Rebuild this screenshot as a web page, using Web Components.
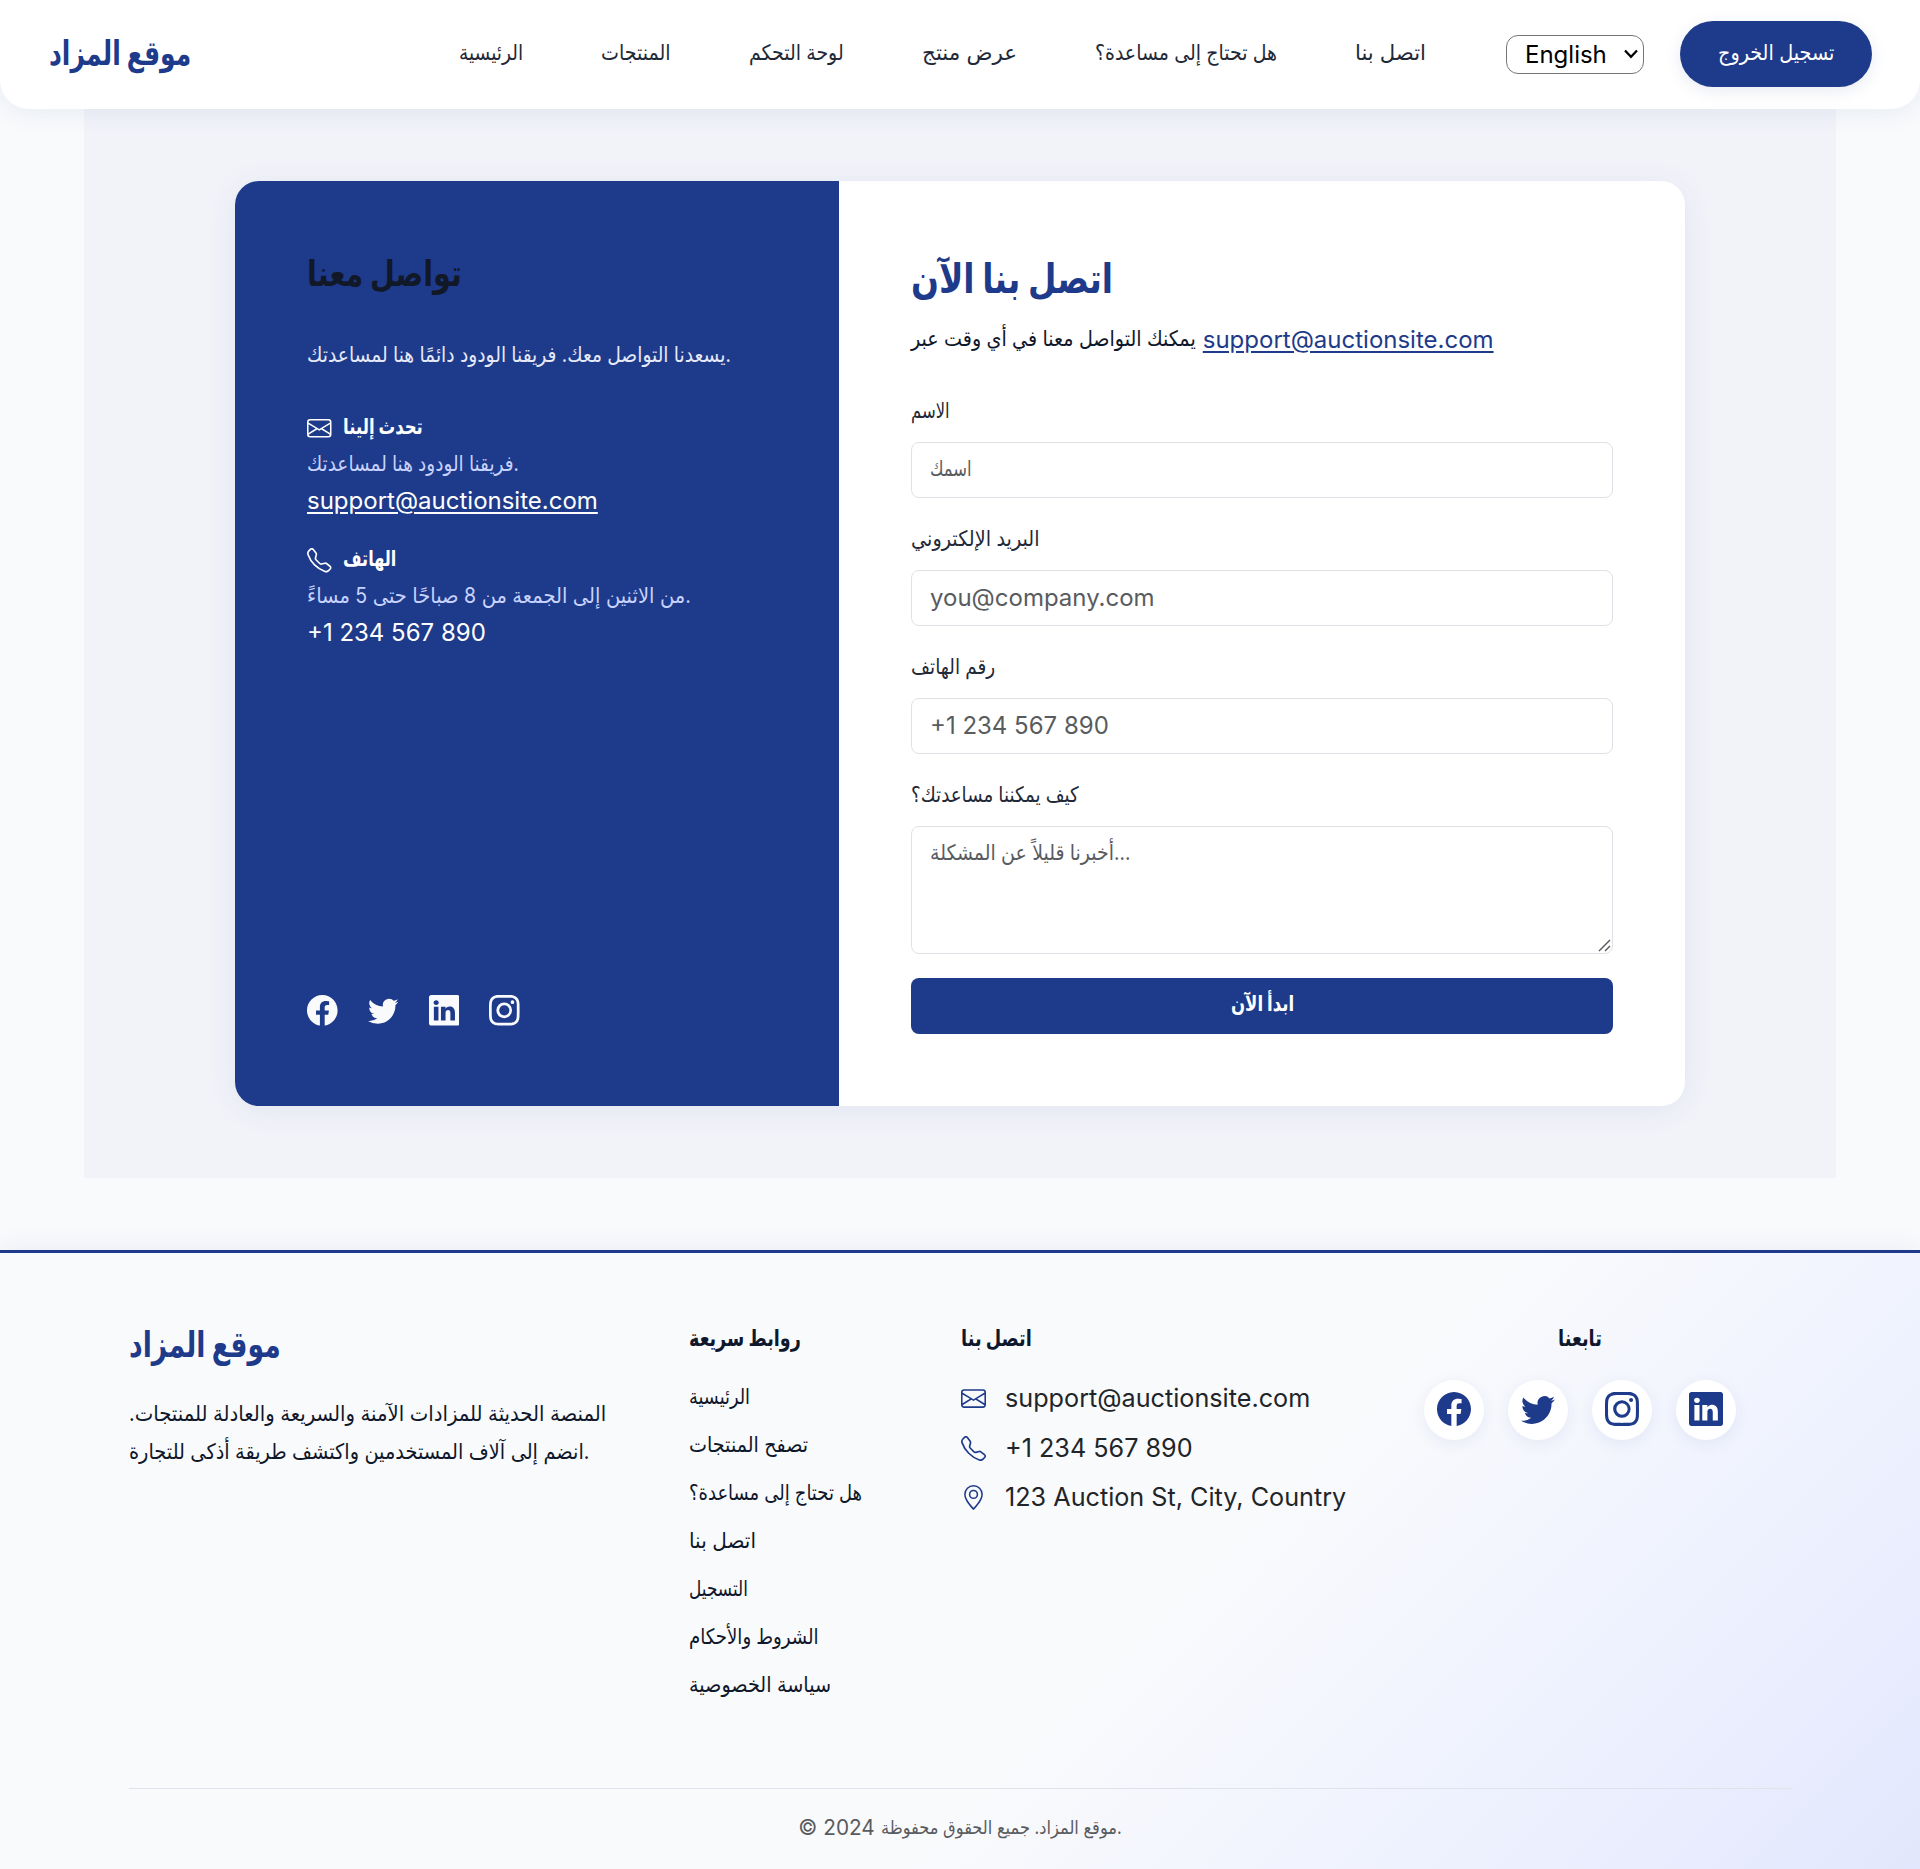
<!DOCTYPE html>
<html lang="en">
<head>
<meta charset="utf-8">
<title>موقع المزاد</title>
<style>
html,body{margin:0;padding:0}
body{font-family:Inter,"DejaVu Sans",sans-serif;font-size:24px;line-height:36.7px;color:#0f172a;background:#f9fafc}
</style>
</head>
<body>
<auction-page></auction-page>
<script>
const ICONS={
facebook:'<path d="M16 8.049c0-4.446-3.582-8.05-8-8.05C3.58 0-.002 3.603-.002 8.05c0 4.017 2.926 7.347 6.75 7.951v-5.625h-2.03V8.05H6.75V6.275c0-2.017 1.195-3.131 3.022-3.131.876 0 1.791.157 1.791.157v1.98h-1.009c-.993 0-1.303.621-1.303 1.258v1.51h2.218l-.354 2.326H9.25V16c3.824-.604 6.75-3.934 6.75-7.951"/>',
twitter:'<path d="M5.026 15c6.038 0 9.341-5.003 9.341-9.334q.002-.211-.006-.422A6.7 6.7 0 0 0 16 3.542a6.7 6.7 0 0 1-1.889.518 3.3 3.3 0 0 0 1.447-1.817 6.5 6.5 0 0 1-2.087.793A3.286 3.286 0 0 0 7.875 6.03a9.32 9.32 0 0 1-6.767-3.429 3.29 3.29 0 0 0 1.018 4.382A3.3 3.3 0 0 1 .64 6.575v.045a3.29 3.29 0 0 0 2.632 3.218 3.2 3.2 0 0 1-.865.115 3 3 0 0 1-.614-.057 3.28 3.28 0 0 0 3.067 2.277A6.6 6.6 0 0 1 .78 13.58a6 6 0 0 1-.78-.045A9.34 9.34 0 0 0 5.026 15"/>',
linkedin:'<path d="M0 1.146C0 .513.526 0 1.175 0h13.65C15.474 0 16 .513 16 1.146v13.708c0 .633-.526 1.146-1.175 1.146H1.175C.526 16 0 15.487 0 14.854zm4.943 12.248V6.169H2.542v7.225zm-1.2-8.212c.837 0 1.358-.554 1.358-1.248-.015-.709-.52-1.248-1.342-1.248S2.4 3.226 2.4 3.934c0 .694.521 1.248 1.327 1.248zm4.908 8.212V9.359c0-.216.016-.432.08-.586.173-.431.568-.878 1.232-.878.869 0 1.216.662 1.216 1.634v3.865h2.401V9.25c0-2.22-1.184-3.252-2.764-3.252-1.274 0-1.845.7-2.165 1.193v.025h-.016l.016-.025V6.169h-2.4c.03.678 0 7.225 0 7.225z"/>',
instagram:'<path d="M8 0C5.829 0 5.556.01 4.703.048 3.85.088 3.269.222 2.76.42a3.9 3.9 0 0 0-1.417.923A3.9 3.9 0 0 0 .42 2.76C.222 3.268.087 3.85.048 4.7.01 5.555 0 5.827 0 8.001c0 2.172.01 2.444.048 3.297.04.852.174 1.433.372 1.942.205.526.478.972.923 1.417.444.445.89.719 1.416.923.51.198 1.09.333 1.942.372C5.555 15.99 5.827 16 8 16s2.444-.01 3.298-.048c.851-.04 1.434-.174 1.943-.372a3.9 3.9 0 0 0 1.416-.923c.445-.445.718-.891.923-1.417.197-.509.332-1.09.372-1.942C15.99 10.445 16 10.173 16 8s-.01-2.445-.048-3.299c-.04-.851-.175-1.433-.372-1.941a3.9 3.9 0 0 0-.923-1.417A3.9 3.9 0 0 0 13.24.42c-.51-.198-1.092-.333-1.943-.372C10.443.01 10.172 0 7.998 0zm-.717 1.442h.718c2.136 0 2.389.007 3.232.046.78.035 1.204.166 1.486.275.373.145.64.319.92.599s.453.546.598.92c.11.281.24.705.275 1.485.039.843.047 1.096.047 3.231s-.008 2.389-.047 3.232c-.035.78-.166 1.203-.275 1.485a2.5 2.5 0 0 1-.599.919c-.28.28-.546.453-.92.598-.28.11-.704.24-1.485.276-.843.038-1.096.047-3.232.047s-2.39-.009-3.233-.047c-.78-.036-1.203-.166-1.485-.276a2.5 2.5 0 0 1-.92-.598 2.5 2.5 0 0 1-.6-.92c-.109-.281-.24-.705-.275-1.485-.038-.843-.046-1.096-.046-3.233s.008-2.388.046-3.231c.036-.78.166-1.204.276-1.486.145-.373.319-.64.599-.92s.546-.453.92-.598c.282-.11.705-.24 1.485-.276.738-.034 1.024-.044 2.515-.045zm4.988 1.328a.96.96 0 1 0 0 1.92.96.96 0 0 0 0-1.92m-4.27 1.122a4.109 4.109 0 1 0 0 8.217 4.109 4.109 0 0 0 0-8.217m0 1.441a2.667 2.667 0 1 1 0 5.334 2.667 2.667 0 0 1 0-5.334"/>',
envelope:'<path d="M0 4a2 2 0 0 1 2-2h12a2 2 0 0 1 2 2v8a2 2 0 0 1-2 2H2a2 2 0 0 1-2-2zm2-1a1 1 0 0 0-1 1v.217l7 4.2 7-4.2V4a1 1 0 0 0-1-1zm13 2.383-4.708 2.825L15 11.105zm-.034 6.876-5.64-3.471L8 9.583l-1.326-.795-5.64 3.47A1 1 0 0 0 2 13h12a1 1 0 0 0 .966-.741M1 11.105l4.708-2.897L1 5.383z"/>',
phone:'<path d="M3.654 1.328a.678.678 0 0 0-1.015-.063L1.605 2.3c-.483.484-.661 1.169-.45 1.77a17.6 17.6 0 0 0 4.168 6.608 17.6 17.6 0 0 0 6.608 4.168c.601.211 1.286.033 1.77-.45l1.034-1.034a.678.678 0 0 0-.063-1.015l-2.307-1.794a.68.68 0 0 0-.58-.122l-2.19.547a1.75 1.75 0 0 1-1.657-.459L5.482 8.062a1.75 1.75 0 0 1-.46-1.657l.548-2.19a.68.68 0 0 0-.122-.58zM1.884.511a1.745 1.745 0 0 1 2.612.163L6.29 2.98c.329.423.445.974.315 1.494l-.547 2.19a.68.68 0 0 0 .178.643l2.457 2.457a.68.68 0 0 0 .644.178l2.189-.547a1.75 1.75 0 0 1 1.494.315l2.306 1.794c.829.645.905 1.87.163 2.611l-1.034 1.034c-.74.74-1.846 1.065-2.877.702a18.6 18.6 0 0 1-7.01-4.42 18.6 18.6 0 0 1-4.42-7.009c-.362-1.03-.037-2.137.703-2.877z"/>',
pin:'<path d="M12.166 8.94c-.524 1.062-1.234 2.12-1.96 3.07A32 32 0 0 1 8 14.58a32 32 0 0 1-2.206-2.57c-.726-.95-1.436-2.008-1.96-3.07C3.304 7.867 3 6.862 3 6a5 5 0 0 1 10 0c0 .862-.305 1.867-.834 2.94M8 16s6-5.686 6-10A6 6 0 0 0 2 6c0 4.314 6 10 6 10"/><path d="M8 8a2 2 0 1 1 0-4 2 2 0 0 1 0 4m0 1a3 3 0 1 0 0-6 3 3 0 0 0 0 6"/>'
};
const def=(name,html,after)=>customElements.define(name,class extends HTMLElement{
  connectedCallback(){
    if(this.shadowRoot)return;
    const r=this.attachShadow({mode:'open'});
    r.innerHTML=typeof html==='function'?html(this):html;
    if(after)after(this,r);
  }
});
/* One line of Arabic script set to a given advance width: w = width, s = font size, y = optical baseline shift */
def('fit-text',el=>`<style>
:host{display:inline-block;width:${el.getAttribute('w')}px;white-space:nowrap;line-height:1;font-family:Inter,"DejaVu Sans",sans-serif;text-align:left}
span{display:inline-block;font-size:${el.getAttribute('s')||21.5}px;transform-origin:0 50%}
</style><span dir="${el.getAttribute('d')||'ltr'}">${el.textContent}</span>`,(el,r)=>{
  const s=r.querySelector('span');
  s.style.transform=`translateY(${el.getAttribute('y')||-2.5}px) scaleX(${+el.getAttribute('w')/s.offsetWidth})`;
});
def('ui-icon',el=>`<style>:host{display:block;flex:none;width:${el.getAttribute('size')}px;height:${el.getAttribute('size')}px}svg{display:block;width:100%;height:100%;fill:currentColor}</style><svg viewBox="0 0 16 16">${ICONS[el.getAttribute('name')]}</svg>`);
def('site-nav',`<style>
:host{display:flex;align-items:center;height:109px;box-sizing:border-box;padding:0 48px 0 49px;background:#fff;border-radius:0 0 29px 29px;box-shadow:0 4px 24px rgba(30,58,138,.08);position:relative;color:#1f2937}
.brand{color:#1e3a8a;font-weight:700;margin-right:268px}
nav{display:flex;gap:78px;margin:0 80px 2px 0}
.lang{display:flex;align-items:center;justify-content:space-between;box-sizing:border-box;width:138px;height:39px;padding:1px 5px 0 18px;border:1px solid #767676;border-radius:12px;background:#fff;color:#000;margin-right:36px}
.lang svg{display:block;margin-bottom:2px}
.out{display:flex;align-items:center;justify-content:center;width:192px;height:66px;margin-bottom:2px;border-radius:33px;background:#1e3a8a;color:#fff;box-shadow:0 4px 16px rgba(30,58,138,.1)}
</style>
<div class="brand"><fit-text w="142" s="34" y="1">موقع المزاد</fit-text></div>
<nav><fit-text w="64">الرئيسية</fit-text><fit-text w="70">المنتجات</fit-text><fit-text w="95">لوحة التحكم</fit-text><fit-text w="95">عرض منتج</fit-text><fit-text w="182">هل تحتاج إلى مساعدة؟</fit-text><fit-text w="71">اتصل بنا</fit-text></nav>
<div class="lang" role="combobox"><span>English</span><svg width="14" height="10" viewBox="0 0 14 10" fill="none" stroke="#000" stroke-width="2.2"><path d="M1 1.5 7 7.8 13 1.5"/></svg></div>
<div class="out"><fit-text w="116">تسجيل الخروج</fit-text></div>`);
def('contact-way',el=>`<style>
:host{display:block;margin-bottom:22px}
.t{display:flex;align-items:center;gap:11px;font-weight:700;height:36.7px}
::slotted([slot=sub]){display:block;color:#c7d2fe;height:36.7px}
::slotted([slot=val]){display:block;height:36.7px}
</style><div class="t"><ui-icon name="${el.getAttribute('icon')}" size="24.5"></ui-icon><slot name="title"></slot></div><slot name="sub"></slot><slot name="val"></slot>`);
def('contact-info',`<style>
:host{display:flex;flex-direction:column;width:604px;box-sizing:border-box;padding:72px;background:#1e3a8a;color:#fff}
h2{margin:0;font-size:36px;line-height:44px;height:85px;color:#111827}
p{margin:0;height:72px;color:#e5e9f8}
.soc{display:flex;gap:30.2px;margin-top:auto;padding-bottom:8px;color:#f9fafc}
a{color:#fff;text-underline-offset:3px}
</style>
<h2><fit-text w="155" s="36" y="-2">تواصل معنا</fit-text></h2>
<p><fit-text w="424">يسعدنا التواصل معك. فريقنا الودود دائمًا هنا لمساعدتك.</fit-text></p>
<contact-way icon="envelope"><fit-text slot="title" w="80">تحدث إلينا</fit-text><div slot="sub"><fit-text w="212">فريقنا الودود هنا لمساعدتك.</fit-text></div><div slot="val"><a href="#">support@auctionsite.com</a></div></contact-way>
<contact-way icon="phone"><fit-text slot="title" w="53">الهاتف</fit-text><div slot="sub"><fit-text w="384">من الاثنين إلى الجمعة من 8 صباحًا حتى 5 مساءً.</fit-text></div><div slot="val">+1 234 567 890</div></contact-way>
<div class="soc"><ui-icon name="facebook" size="30.6"></ui-icon><ui-icon name="twitter" size="30.6"></ui-icon><ui-icon name="linkedin" size="30.6"></ui-icon><ui-icon name="instagram" size="30.6"></ui-icon></div>`);
def('form-field',`<style>
:host{display:block;margin-bottom:24px;color:#1f2937}
.l{height:48px}
.b{box-sizing:border-box;height:56px;border:1px solid #dee2e6;border-radius:8px;padding:9px 18px;color:#595c5f;background:#fff}
:host([multi]) .b{height:128px;display:flex;justify-content:space-between;padding-top:15px}
.g{display:none}:host([multi]) .g{display:block;align-self:flex-end;margin:0 -17px -8px 0}
</style><div class="l"><slot name="label"></slot></div><div class="b"><slot></slot><svg class="g" width="13" height="13" viewBox="0 0 13 13" stroke="#555" stroke-width="1.4"><path d="M1 12 12 1M7 12l5-5"/></svg></div>`);
def('contact-form',`<style>
:host{display:block;flex:1;padding:72px;color:#0f172a}
h1{margin:0;color:#1e3a8a;font-size:40px;line-height:50px;height:69px}
p{margin:0;height:72px}
a{color:#1e3a8a;text-underline-offset:3px}
.btn{display:flex;align-items:center;justify-content:center;height:56px;border-radius:8px;background:#1e3a8a;color:#fff;font-weight:700}
</style>
<h1><fit-text w="202" s="41" y="0.5">اتصل بنا الآن</fit-text></h1>
<p><fit-text w="285">يمكنك التواصل معنا في أي وقت عبر</fit-text> <a href="#">support@auctionsite.com</a></p>
<form-field><fit-text slot="label" w="39">الاسم</fit-text><fit-text w="42">اسمك</fit-text></form-field>
<form-field><fit-text slot="label" w="129">البريد الإلكتروني</fit-text>you@company.com</form-field>
<form-field><fit-text slot="label" w="84">رقم الهاتف</fit-text>+1 234 567 890</form-field>
<form-field multi><fit-text slot="label" w="168">كيف يمكننا مساعدتك؟</fit-text><fit-text w="200">أخبرنا قليلاً عن المشكلة...</fit-text></form-field>
<div class="btn"><fit-text w="63" y="-3.5">ابدأ الآن</fit-text></div>`);
def('contact-section',`<style>
:host{display:block;box-sizing:border-box;width:1752px;height:1069px;margin:0 auto 72px;padding:72px 151px;background:#f2f3f9}
.card{display:flex;width:1450px;height:925px;border-radius:24px;overflow:hidden;background:#fff;box-shadow:0 4px 32px rgba(30,58,138,.07)}
</style><div class="card"><contact-info></contact-info><contact-form></contact-form></div>`);
def('site-footer',`<style>
:host{display:block;box-sizing:border-box;height:619px;border-top:3px solid #1e3a8a;padding:72px 129px 0;background:linear-gradient(135deg,#f9fafc 0%,#f9fafc 60%,#f1f4fe 75%,#e2e7fd 100%);box-shadow:0 -4px 24px rgba(30,58,138,.06)}
.cols{display:flex;height:463px}
.c1{width:560px}.c2{width:272px}.c3{width:463px}.c4{width:312px}
.brand{color:#1e3a8a;font-weight:700;height:72px;line-height:46px}
.ln{height:38.4px}
h3{margin:0;font-size:24px;font-weight:700;height:55px;line-height:30px}
.c2 h3{height:54.5px}.c3 h3{height:49px}
.lk{height:48px}
.ct{display:flex;align-items:center;gap:19px;height:49.5px;font-size:25.2px;color:#212529}
.ct ui-icon{color:#1e3a8a}
.c4 h3{text-align:center}
.soc{display:flex;gap:24px;color:#1e3a8a}
.soc div{width:60px;height:60px;border-radius:50%;background:#fff;display:flex;align-items:center;justify-content:center;box-shadow:0 4px 16px rgba(30,58,138,.07)}
.soc ui-icon{margin-bottom:2px}
.copy{border-top:1px solid #dfe2ea;text-align:center;padding-top:21px;color:#595c5f;font-size:20.8px}
</style>
<div class="cols">
<div class="c1"><div class="brand"><fit-text w="152" s="36" y="1">موقع المزاد</fit-text></div><div class="ln"><fit-text w="477" d="rtl">المنصة الحديثة للمزادات الآمنة والسريعة والعادلة للمنتجات.</fit-text></div><div class="ln"><fit-text w="460">انضم إلى آلاف المستخدمين واكتشف طريقة أذكى للتجارة.</fit-text></div></div>
<div class="c2"><h3><fit-text w="112" s="23" y="-2.5">روابط سريعة</fit-text></h3>
<div class="lk"><fit-text w="61">الرئيسية</fit-text></div><div class="lk"><fit-text w="119">تصفح المنتجات</fit-text></div><div class="lk"><fit-text w="173">هل تحتاج إلى مساعدة؟</fit-text></div><div class="lk"><fit-text w="67">اتصل بنا</fit-text></div><div class="lk"><fit-text w="59">التسجيل</fit-text></div><div class="lk"><fit-text w="130">الشروط والأحكام</fit-text></div><div class="lk"><fit-text w="142">سياسة الخصوصية</fit-text></div></div>
<div class="c3"><h3><fit-text w="71" s="23" y="-2.5">اتصل بنا</fit-text></h3>
<div class="ct"><ui-icon name="envelope" size="25"></ui-icon><span>support@auctionsite.com</span></div><div class="ct"><ui-icon name="phone" size="25"></ui-icon><span>+1 234 567 890</span></div><div class="ct"><ui-icon name="pin" size="25"></ui-icon><span>123 Auction St, City, Country</span></div></div>
<div class="c4"><h3><fit-text w="44" s="23" y="-2.5">تابعنا</fit-text></h3><div class="soc"><div><ui-icon name="facebook" size="34"></ui-icon></div><div><ui-icon name="twitter" size="34"></ui-icon></div><div><ui-icon name="instagram" size="34"></ui-icon></div><div><ui-icon name="linkedin" size="34"></ui-icon></div></div></div>
</div>
<div class="copy">© 2024 <fit-text w="241" s="18.5" y="-1">موقع المزاد. جميع الحقوق محفوظة.</fit-text></div>`);
def('auction-page',`<style>:host{display:block;width:1920px;height:1869px;overflow:hidden}</style><site-nav></site-nav><contact-section></contact-section><site-footer></site-footer>`);
</script>
</body>
</html>
